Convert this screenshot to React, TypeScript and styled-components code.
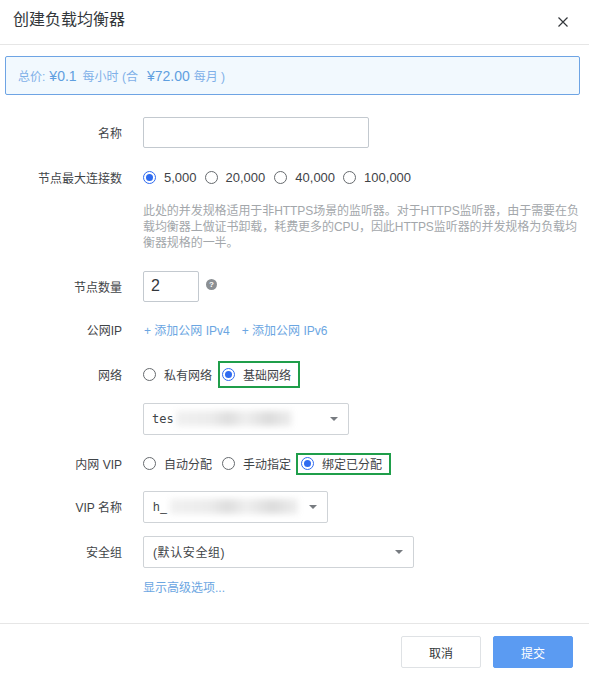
import React from "react";
import styled, { createGlobalStyle } from "styled-components";

const Global = createGlobalStyle`
  html, body { margin: 0; padding: 0; background: #fff; }
  body { font-family: "Liberation Sans", "Noto Sans CJK SC", sans-serif; font-size: 12px; color: #3c4043; }
`;
const Dialog = styled.div`
  width: 589px; height: 674px; display: flex; flex-direction: column; background: #fff; overflow: hidden;
`;
const Header = styled.header`
  height: 45px; box-sizing: border-box; border-bottom: 1px solid #e6e6e6; padding: 0 19px 0 13px;
  display: flex; align-items: center; justify-content: space-between;
`;
const Title = styled.h1`
  margin: 0 0 4px; font-size: 16px; font-weight: 400; color: #33373b; line-height: 24px;
`;
const Close = styled.button`
  border: 0; background: none; padding: 0; width: 14px; height: 14px; display: flex; color: #33373b;
`;
const Notice = styled.div`
  margin: 11px 9px 0 5px; height: 39px; box-sizing: border-box; border: 1px solid #6ea4e4; border-radius: 2px;
  background: #f2f9fe; display: flex; align-items: center; padding-left: 12px; color: #7fb0e8; font-size: 12px;
  white-space: pre;
`;
const Amount = styled.span<{ $l: number; $r: number }>`
  color: #5f9fe0; font-size: 14px; margin: 0 ${(p) => p.$r}px 0 ${(p) => p.$l}px;
`;
const Form = styled.div`
  flex: 1; display: flex; flex-direction: column; padding-top: 22px;
`;
const Row = styled.div<{ $h: number; $mb: number }>`
  display: grid; grid-template-columns: 122px 1fr; column-gap: 21px; align-items: center;
  height: ${(p) => p.$h}px; margin-bottom: ${(p) => p.$mb}px;
`;
const Label = styled.label`
  text-align: right; color: #3f4448; font-size: 12px;
`;
const Controls = styled.div`
  display: flex; align-items: center;
`;
const TextInput = styled.div<{ $w: number }>`
  width: ${(p) => p.$w}px; height: 31px; box-sizing: border-box; border: 1px solid #c3c9cf; border-radius: 2px;
  background: #fff; padding-left: 7px; display: flex; align-items: center; font-size: 16px; color: #33373b;
`;
const Radio = styled.span<{ $on?: boolean }>`
  width: 13px; height: 13px; box-sizing: border-box; border-radius: 50%; flex: none;
  border: 1px solid ${(p) => (p.$on ? "#2f6bf0" : "#666a6e")};
  background: #fff; display: flex; align-items: center; justify-content: center;
  &::after { content: ""; width: 7px; height: 7px; border-radius: 50%; background: ${(p) => (p.$on ? "#2f6bf0" : "transparent")}; }
`;
const Option = styled.span<{ $mr: number; $size?: number }>`
  display: inline-flex; align-items: center; gap: 8px; margin-right: ${(p) => p.$mr}px; color: #3f4448;
  font-size: ${(p) => p.$size ?? 12}px;
`;
const Marked = styled.span<{ $w: number; $h: number; $pad: number }>`
  display: inline-flex; align-items: center; gap: 8px; box-sizing: border-box; color: #3f4448; flex: none;
  width: ${(p) => p.$w}px; height: ${(p) => p.$h}px; border: 2px solid #1f9e4a;
  padding-left: ${(p) => p.$pad}px; margin-left: -2px;
`;
const Help = styled.p`
  margin: 0 0 19px 143px; width: 440px; color: #a3a7ab; font-size: 12px; line-height: 16.2px; white-space: nowrap;
  letter-spacing: -0.07px;
`;
const HelpIcon = styled.span`
  width: 11px; height: 11px; border-radius: 50%; background: #8b8f93; color: #fff; font-size: 8px; font-weight: 700;
  display: flex; align-items: center; justify-content: center; margin: 0 0 3px 7px;
`;
const Link = styled.a<{ $ml: number }>`
  color: #6ba6e2; font-size: 12px; margin-right: 11px; margin-left: ${(p) => p.$ml}px;
`;
const Select = styled.div<{ $w: number }>`
  width: ${(p) => p.$w}px; height: 32px; box-sizing: border-box; border: 1px solid #cfd3d7; border-radius: 2px;
  display: flex; align-items: center; justify-content: space-between; padding: 0 10px 0 9px; background: #fff;
  color: #3f4448; font-size: 12px;
`;
const SelectValue = styled.span`
  display: flex; align-items: center; letter-spacing: 0.6px;
`;
const Mono = styled.span`
  font-family: "DejaVu Sans Mono", "Liberation Mono", monospace; font-size: 12px; letter-spacing: 0; margin-left: -1px;
`;
const Smear = styled.span<{ $w: number }>`
  display: block; width: ${(p) => p.$w}px; height: 15px; filter: blur(3px); margin-left: 2px;
  background: linear-gradient(90deg, #f0f0f0 0%, #ececec 30%, #dedede 45%, #efefef 60%, #dcdcdc 80%, #eeeeee 100%);
`;
const Caret = styled.span`
  width: 0; height: 0; border-left: 4px solid transparent; border-right: 4px solid transparent; border-top: 4px solid #777b80; flex: none;
`;
const Footer = styled.footer`
  height: 51px; box-sizing: border-box; border-top: 1px solid #e6e6e6; padding: 12px 16px 0 0;
  display: flex; justify-content: flex-end; gap: 12px;
`;
const Button = styled.button<{ $primary?: boolean }>`
  width: 80px; height: 32px; border-radius: 2px; font-size: 12px; font-family: inherit;
  border: 1px solid ${(p) => (p.$primary ? "#5b9bf2" : "#dfe2e5")};
  background: ${(p) => (p.$primary ? "#5b9bf2" : "#fff")};
  color: ${(p) => (p.$primary ? "#fff" : "#33373b")};
`;

export default function App() {
  return (
    <Dialog>
      <Global />
      <Header>
        <Title>创建负载均衡器</Title>
        <Close aria-label="关闭">
          <svg width="14" height="14" viewBox="0 0 14 14"><path d="M2.5 2.5l9 9M11.5 2.5l-9 9" stroke="currentColor" strokeWidth="1.2" fill="none" /></svg>
        </Close>
      </Header>
      <Notice>
        总价:<Amount $l={4} $r={6}>¥0.1</Amount>每小时 (合<Amount $l={9} $r={4}>¥72.00</Amount>每月 )
      </Notice>
      <Form>
        <Row $h={31} $mb={14}>
          <Label>名称</Label>
          <Controls><TextInput $w={226} /></Controls>
        </Row>
        <Row $h={30} $mb={11}>
          <Label>节点最大连接数</Label>
          <Controls>
            <Option $mr={8} $size={13}><Radio $on />5,000</Option>
            <Option $mr={9} $size={13}><Radio />20,000</Option>
            <Option $mr={8} $size={13}><Radio />40,000</Option>
            <Option $mr={0} $size={13}><Radio />100,000</Option>
          </Controls>
        </Row>
        <Help>
          此处的并发规格适用于非HTTPS场景的监听器。对于HTTPS监听器，由于需要在负<br />
          载均衡器上做证书卸载，耗费更多的CPU，因此HTTPS监听器的并发规格为负载均<br />
          衡器规格的一半。
        </Help>
        <Row $h={31} $mb={13}>
          <Label>节点数量</Label>
          <Controls>
            <TextInput $w={56}>2</TextInput>
            <HelpIcon>?</HelpIcon>
          </Controls>
        </Row>
        <Row $h={30} $mb={16}>
          <Label>公网IP</Label>
          <Controls>
            <Link $ml={1}>+ 添加公网 IPv4</Link>
            <Link $ml={1}>+ 添加公网 IPv6</Link>
          </Controls>
        </Row>
        <Row $h={27} $mb={15}>
          <Label>网络</Label>
          <Controls>
            <Option $mr={8}><Radio />私有网络</Option>
            <Marked $w={82} $h={27} $pad={2}><Radio $on />基础网络</Marked>
          </Controls>
        </Row>
        <Row $h={32} $mb={18}>
          <span />
          <Select $w={206}>
            <SelectValue><Mono>tes</Mono><Smear $w={116} /></SelectValue>
            <Caret />
          </Select>
        </Row>
        <Row $h={22} $mb={16}>
          <Label>内网 VIP</Label>
          <Controls>
            <Option $mr={10}><Radio />自动分配</Option>
            <Option $mr={7}><Radio />手动指定</Option>
            <Marked $w={95} $h={22} $pad={3}><Radio $on />绑定已分配</Marked>
          </Controls>
        </Row>
        <Row $h={32} $mb={13}>
          <Label>VIP 名称</Label>
          <Select $w={185}>
            <SelectValue>h_<Smear $w={128} /></SelectValue>
            <Caret />
          </Select>
        </Row>
        <Row $h={32} $mb={10}>
          <Label>安全组</Label>
          <Select $w={271}>
            <SelectValue>(默认安全组)</SelectValue>
            <Caret />
          </Select>
        </Row>
        <Row $h={18} $mb={0}>
          <span />
          <Controls><Link $ml={0}>显示高级选项...</Link></Controls>
        </Row>
      </Form>
      <Footer>
        <Button>取消</Button>
        <Button $primary>提交</Button>
      </Footer>
    </Dialog>
  );
}
